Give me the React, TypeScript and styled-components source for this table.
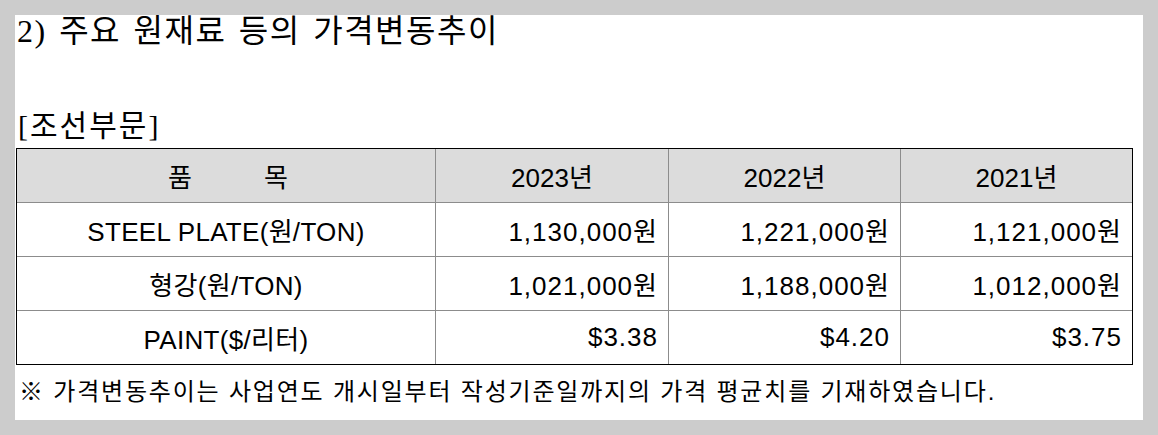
import { styled, createGlobalStyle } from 'styled-components';

const GlobalStyle = createGlobalStyle`
  html, body {
    margin: 0;
    padding: 0;
    background: #cccccc;
  }
`;

interface PriceRow {
  name: string;
  values: string[];
}

const years = ['2023년', '2022년', '2021년'];

const priceRows: PriceRow[] = [
  { name: 'STEEL PLATE(원/TON)', values: ['1,130,000원', '1,221,000원', '1,121,000원'] },
  { name: '형강(원/TON)', values: ['1,021,000원', '1,188,000원', '1,012,000원'] },
  { name: 'PAINT($/리터)', values: ['$3.38', '$4.20', '$3.75'] },
];

function App() {
  return (
    <>
      <GlobalStyle />
      <Page>
        <Sheet>
          <Title>2) 주요 원재료 등의 가격변동추이</Title>
          <SectionLabel>[조선부문]</SectionLabel>

          <PriceTable>
            <colgroup>
              <col style={{ width: 419 }} />
              <col style={{ width: 233 }} />
              <col style={{ width: 232 }} />
              <col style={{ width: 231 }} />
            </colgroup>
            <thead>
              <tr>
                <HeadCell>
                  <ItemHead>
                    <span>품</span>
                    <span>목</span>
                  </ItemHead>
                </HeadCell>
                {years.map((year) => (
                  <HeadCell key={year}>{year}</HeadCell>
                ))}
              </tr>
            </thead>
            <tbody>
              {priceRows.map((row) => (
                <tr key={row.name}>
                  <Cell $align="center">{row.name}</Cell>
                  {row.values.map((value, i) => (
                    <Cell key={i} $align="right">
                      {value}
                    </Cell>
                  ))}
                </tr>
              ))}
            </tbody>
          </PriceTable>

          <Note>※ 가격변동추이는 사업연도 개시일부터 작성기준일까지의 가격 평균치를 기재하였습니다.</Note>
        </Sheet>
      </Page>
    </>
  );
}

const Page = styled.div`
  padding: 15px;
`;

const Sheet = styled.div`
  display: flex;
  flex-direction: column;

  width: 1128px;
  height: 405px;
  padding-left: 1px;
  box-sizing: border-box;

  background: #ffffff;
  color: #000000;
`;

const Title = styled.h1`
  margin: 0;
  height: 36px;
  padding-left: 1px;

  font-family: 'Liberation Serif', 'Noto Sans CJK KR', serif;
  font-size: 32px;
  font-weight: 400;
  line-height: 33px;
  letter-spacing: 1.5px;
  word-spacing: 3px;
  white-space: nowrap;
`;

const SectionLabel = styled.h2`
  margin: 58px 0 0;
  height: 39px;
  padding-left: 2px;

  font-family: 'Liberation Serif', 'Noto Sans CJK KR', serif;
  font-size: 30px;
  font-weight: 400;
  line-height: 34px;
  letter-spacing: 2px;
  white-space: nowrap;
`;

const PriceTable = styled.table`
  width: 1117px;
  table-layout: fixed;
  border-collapse: separate;
  border-spacing: 0;
  border: 1px solid #000000;

  font-family: 'Liberation Sans', 'Noto Sans CJK KR', sans-serif;
  font-size: 26px;
  color: #000000;

  tr > *:not(:last-child) {
    border-right: 1px solid #8c8c8c;
  }

  tr:not(:last-child) > td,
  thead th {
    border-bottom: 1px solid #8c8c8c;
  }

  tbody tr:last-child > td {
    height: 53px;
  }
`;

const HeadCell = styled.th`
  height: 54px;
  padding: 0;
  box-sizing: border-box;

  background: #dcdcdc;
  font-weight: 400;
  text-align: center;
`;

const ItemHead = styled.div`
  display: flex;
  justify-content: center;
  gap: 72px;
  padding-left: 4px;
`;

const Cell = styled.td<{ $align: 'center' | 'right' }>`
  height: 54px;
  padding: 0 10px;
  box-sizing: border-box;

  text-align: ${({ $align }) => $align};
  letter-spacing: ${({ $align }) => ($align === 'right' ? '1px' : '0.3px')};
  white-space: nowrap;
`;

const Note = styled.p`
  margin: 12px 0 0;
  padding-left: 3px;

  font-family: 'Liberation Sans', 'Noto Sans CJK KR', sans-serif;
  font-size: 24px;
  line-height: 30px;
  letter-spacing: 1.8px;
  white-space: nowrap;
`;

export default App;
